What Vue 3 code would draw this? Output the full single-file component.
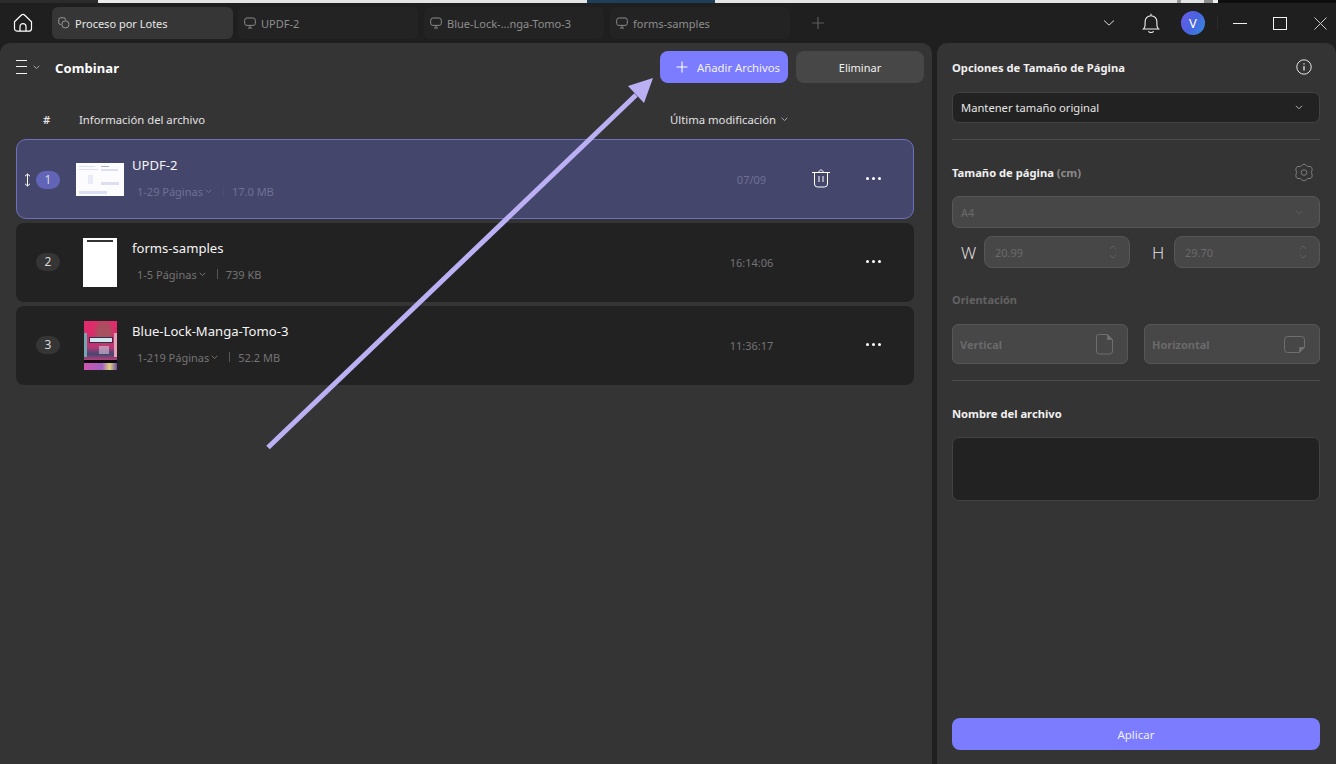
<template>
  <div class="app">
    <div class="desktop-strip">
      <span class="strip-dark"></span>
      <span class="strip-pale"></span>
      <span class="strip-light"></span>
      <span class="strip-blue"></span>
      <span class="strip-light strip-fill"></span>
      <span class="strip-grey"></span>
      <span class="strip-black"></span>
    </div>

    <header class="titlebar">
      <button class="home-btn">
        <svg width="20" height="20" viewBox="0 0 20 20" fill="none" stroke="#fff" stroke-width="1.2">
          <path d="M1.500 8.800 8.200 2.300a2.600 2.600 0 0 1 3.600 0l6.700 6.500v6.600a2.800 2.800 0 0 1-2.800 2.800H4.300a2.800 2.800 0 0 1-2.800-2.800Z" />
          <path d="M7 18.200v-4.600a3 3 0 0 1 6 0v4.600" />
        </svg>
      </button>
      <div class="tab tab-active">
        <svg width="12" height="12" viewBox="0 0 12 12" fill="none" stroke="#9a9a9a" stroke-width="1">
          <path d="M3.200 7.400H2.400A1.600 1.600 0 0 1 .8 5.800V2.400A1.600 1.600 0 0 1 2.400.8h3.400a1.600 1.600 0 0 1 1.600 1.600v.8" />
          <circle cx="7.400" cy="7.400" r="3.600" />
        </svg>
        <span>Proceso por Lotes</span>
      </div>
      <div v-for="tab in tabs" :key="tab" class="tab">
        <svg width="12" height="12" viewBox="0 0 12 12" fill="none" stroke="#8a8a8a" stroke-width="1">
          <rect x=".7" y="1" width="10.600" height="7.400" rx="2.200" />
          <path d="M6 8.400v2.200M4 11h4" />
        </svg>
        <span>{{ tab }}</span>
      </div>
      <svg class="tab-add" width="14" height="14" viewBox="0 0 14 14" stroke="#5c5c5c" stroke-width="1.200">
        <path d="M7 1v12M1 7h12" />
      </svg>
      <div class="window-tools">
        <svg class="tool-chevron" width="12" height="8" viewBox="0 0 12 8" fill="none" stroke="#d8d8d8" stroke-width="1">
          <path d="m1 1.500 5 4.600 5-4.600" />
        </svg>
        <svg class="tool-bell" width="18" height="21" viewBox="0 0 18 21" fill="none" stroke="#f2f2f2" stroke-width="1.100">
          <path d="M1.500 16h15c-1.200-1.100-1.600-2.400-1.600-4V8.600a5.900 5.900 0 0 0-11.800 0V12c0 1.600-.4 2.900-1.600 4Z" />
          <path d="M9 .8v1.800M6.400 18.400c1.200 1.500 4 1.500 5.200 0" />
        </svg>
        <div class="avatar">V</div>
        <span class="tool-sep"></span>
        <span class="win-min"></span>
        <span class="win-max"></span>
        <svg class="win-close" width="13" height="13" viewBox="0 0 13 13" stroke="#c8c8c8" stroke-width="1">
          <path d="m.5.5 12 12M12.500.5l-12 12" />
        </svg>
      </div>
    </header>

    <main class="workspace">
      <section class="list-panel">
        <div class="list-head">
          <svg class="menu-icon" width="11" height="14" viewBox="0 0 11 14" stroke="#f0f0f0" stroke-width="1">
            <path d="M0 .5h11M0 6.500h11M0 13.500h11" />
          </svg>
          <svg class="menu-chevron" width="7" height="5" viewBox="0 0 7 5" fill="none" stroke="#a8a8a8" stroke-width="1">
            <path d="m.7.800 2.800 2.800L6.300.8" />
          </svg>
          <h1 class="panel-title">Combinar</h1>
          <button class="btn btn-add">
            <svg width="12" height="12" viewBox="0 0 12 12" stroke="#fff" stroke-width="1.100">
              <path d="M6 .5v11M.5 6h11" />
            </svg>
            <span>Añadir Archivos</span>
          </button>
          <button class="btn btn-remove">Eliminar</button>
        </div>

        <div class="columns">
          <span class="col-num">#</span>
          <span class="col-info">Información del archivo</span>
          <span class="col-date">
            Última modificación
            <svg width="7" height="5" viewBox="0 0 7 5" fill="none" stroke="#a8a8a8" stroke-width="1">
              <path d="m.7.800 2.800 2.800L6.300.8" />
            </svg>
          </span>
        </div>

        <div class="rows">
          <article v-for="file in files" :key="file.id" class="row" :class="{ selected: file.selected }">
            <div class="row-index">
              <svg v-if="file.selected" class="drag" width="7" height="14" viewBox="0 0 7 14" fill="none" stroke="#fff" stroke-width="1">
                <path d="M3.500 1v12M1 3.200 3.500 1 6 3.200M1 10.800 3.500 13 6 10.800" />
              </svg>
              <span class="badge">{{ file.id }}</span>
            </div>
            <div class="thumb-cell">
              <div v-if="file.kind === 'doc'" class="thumb-doc">
                <i class="d1"></i><i class="d1b"></i><i class="d2"></i><i class="d3"></i><i class="d3b"></i><i class="d4"></i><i class="d5"></i>
              </div>
              <div v-else-if="file.kind === 'form'" class="thumb-form"><i></i></div>
              <div v-else class="thumb-manga">
                <i class="m-cover"><b></b><u></u></i><i class="m-bar"></i><i class="m-foot"></i>
              </div>
            </div>
            <div class="file-text">
              <div class="file-name">{{ file.name }}</div>
              <div class="file-meta">
                <span>{{ file.pages }}</span>
                <svg width="7" height="5" viewBox="0 0 7 5" fill="none" stroke="currentColor" stroke-width="1">
                  <path d="m.7.800 2.800 2.800L6.300.8" />
                </svg>
                <span class="meta-sep"></span>
                <span>{{ file.size }}</span>
              </div>
            </div>
            <div class="file-date">{{ file.date }}</div>
            <div class="file-trash">
              <svg v-if="file.selected" width="18" height="20" viewBox="0 0 18 20" fill="none" stroke="#fff" stroke-width="1">
                <path d="M0 4.500h18M6.500 4 9 1.500 11.500 4M2.500 5v11a3 3 0 0 0 3 3h7a3 3 0 0 0 3-3V5M7 8v6M11 8v6" />
              </svg>
            </div>
            <div class="file-more"><i></i><i></i><i></i></div>
          </article>
        </div>
      </section>

      <aside class="options-panel">
        <div class="opt-head first">
          <h2>Opciones de Tamaño de Página</h2>
          <svg width="16" height="16" viewBox="0 0 16 16" fill="none" stroke="#e4e4e4" stroke-width="1">
            <circle cx="8" cy="8" r="7.200" />
            <path d="M8 7v4.500M8 4.200v1.400" stroke-width="1.300" />
          </svg>
        </div>
        <div class="select">
          <span>Mantener tamaño original</span>
          <svg width="8" height="5" viewBox="0 0 8 5" fill="none" stroke="#b0b0b0" stroke-width="1">
            <path d="m1 .8 3 3 3-3" />
          </svg>
        </div>
        <div class="divider"></div>

        <div class="opt-head size">
          <h2>Tamaño de página <em>(cm)</em></h2>
          <svg width="20" height="19" viewBox="0 0 20 19" fill="none" stroke="#7d7d7d" stroke-width="1">
            <path d="M6.500 3.500Q10-1 13.500 3.500 20 2.500 17.500 9.500 20 16.500 13.500 15.500 10 20 6.500 15.500 0 16.500 2.500 9.500 0 2.500 6.500 3.500Z" />
            <circle cx="10" cy="9.500" r="2.800" />
          </svg>
        </div>
        <div class="select disabled">
          <span>A4</span>
          <svg width="8" height="5" viewBox="0 0 8 5" fill="none" stroke="#5e5e5e" stroke-width="1">
            <path d="m1 .8 3 3 3-3" />
          </svg>
        </div>
        <div class="dims">
          <span class="dim-label w">W</span>
          <div class="dim-input">
            <span>20.99</span>
            <svg width="8" height="14" viewBox="0 0 8 14" fill="none" stroke="#5e5e5e" stroke-width="1">
              <path d="m1 4 3-3 3 3M1 10l3 3 3-3" />
            </svg>
          </div>
          <span class="dim-label h">H</span>
          <div class="dim-input">
            <span>29.70</span>
            <svg width="8" height="14" viewBox="0 0 8 14" fill="none" stroke="#5e5e5e" stroke-width="1">
              <path d="m1 4 3-3 3 3M1 10l3 3 3-3" />
            </svg>
          </div>
        </div>

        <h3 class="orient-title">Orientación</h3>
        <div class="orient">
          <div class="orient-btn">
            <span>Vertical</span>
            <svg width="17" height="21" viewBox="0 0 17 21" fill="none" stroke="#6e6e6e" stroke-width="1">
              <path d="M3.500.5h8l5 5v11.500a3 3 0 0 1-3 3h-10a3 3 0 0 1-3-3v-14a3 3 0 0 1 3-3Z" />
              <path d="M11.500.5v5h5" fill="#6e6e6e" />
            </svg>
          </div>
          <div class="orient-btn">
            <span>Horizontal</span>
            <svg width="21" height="17" viewBox="0 0 21 17" fill="none" stroke="#6e6e6e" stroke-width="1">
              <path d="M3.500.5h14a3 3 0 0 1 3 3v8l-5 5h-12a3 3 0 0 1-3-3v-10a3 3 0 0 1 3-3Z" />
              <path d="M20.500 11.500h-5v5" fill="#6e6e6e" />
            </svg>
          </div>
        </div>
        <div class="divider lower"></div>

        <div class="opt-head name">
          <h2>Nombre del archivo</h2>
        </div>
        <div class="name-box"></div>
        <button class="apply">Aplicar</button>
      </aside>
    </main>

    <svg class="callout" width="1336" height="764" viewBox="0 0 1336 764">
      <path d="M268 447.500 636 95" stroke="#bcb0f5" stroke-width="5" fill="none" />
      <path d="M653 78 628 86 644 103Z" fill="#bcb0f5" />
    </svg>
  </div>
</template>

<script setup>
const tabs = ['UPDF-2', 'Blue-Lock-...nga-Tomo-3', 'forms-samples']

const files = [
  { id: 1, kind: 'doc', name: 'UPDF-2', pages: '1-29 Páginas', size: '17.0 MB', date: '07/09', selected: true },
  { id: 2, kind: 'form', name: 'forms-samples', pages: '1-5 Páginas', size: '739 KB', date: '16:14:06', selected: false },
  { id: 3, kind: 'manga', name: 'Blue-Lock-Manga-Tomo-3', pages: '1-219 Páginas', size: '52.2 MB', date: '11:36:17', selected: false }
]
</script>

<style>
html,
body {
  margin: 0;
  background: #1f1f1f;
}
</style>

<style scoped>
.app {
  position: relative;
  width: 1336px;
  height: 764px;
  overflow: hidden;
  display: flex;
  flex-direction: column;
  background: #1f1f1f;
  color: #fff;
  font-family: "Noto Sans", "Open Sans", "Liberation Sans", sans-serif;
  font-size: 12px;
}

.desktop-strip {
  display: flex;
  height: 3px;
  flex: none;
}
.strip-dark { width: 98px; background: #2b2b2b; }
.strip-pale { width: 22px; background: #ececec; }
.strip-light { width: 467px; background: #e4e4e4; }
.strip-blue { width: 128px; background: #1d4058; }
.strip-fill { width: 462px; }
.strip-grey { width: 41px; background: linear-gradient(90deg, #999 0 10%, #e4e4e4 10% 66%, #8e8e8e 66% 88%, #eee 88%); }
.strip-black { flex: 1; background: #0e0e0e; }

.titlebar {
  display: flex;
  align-items: center;
  height: 40px;
  flex: none;
  background: #1f1f1f;
}
.home-btn {
  width: 52px;
  height: 40px;
  padding: 0 6px 0 0;
  border: 0;
  background: none;
  display: flex;
  align-items: center;
  justify-content: center;
}
.tab {
  width: 180px;
  height: 32px;
  margin-right: 6px;
  padding-left: 6px;
  box-sizing: border-box;
  display: flex;
  align-items: center;
  gap: 5px;
  border-radius: 6px;
  background: #232323;
  color: #8e8e8e;
  font-size: 11px;
  white-space: nowrap;
}
.tab-active {
  width: 181px;
  margin-right: 5px;
  background: #363636;
  color: #e8e8e8;
}
.tab-add {
  margin-left: 15px;
}
.window-tools {
  margin-left: auto;
  display: flex;
  align-items: center;
  height: 100%;
}
.tool-chevron { margin-right: 27px; }
.tool-bell { margin-right: 21px; }
.avatar {
  width: 24px;
  height: 24px;
  margin-top: -1px;
  border-radius: 50%;
  background: linear-gradient(120deg, #6a5bea 0%, #4a63e0 50%, #2f8fe0 100%);
  display: flex;
  align-items: center;
  justify-content: center;
  font-size: 13px;
}
.tool-sep {
  width: 1px;
  height: 14px;
  margin: 0 15px 0 12px;
  background: #2a2a2a;
}
.win-min {
  width: 14px;
  height: 1px;
  background: #f0f0f0;
  margin-right: 26px;
}
.win-max {
  width: 12px;
  height: 11px;
  border: 1px solid #f0f0f0;
  margin-right: 27px;
}
.win-close { margin-right: 9px; }

.workspace {
  flex: 1;
  display: flex;
  gap: 5px;
  min-height: 0;
}
.list-panel,
.options-panel {
  background: #353435;
  border-radius: 10px 10px 0 0;
}
.list-panel {
  width: 932px;
  flex: none;
  box-sizing: border-box;
  padding: 8px 8px 0 16px;
}
.list-head {
  display: flex;
  align-items: center;
  height: 32px;
}
.menu-chevron { margin-left: 6px; }
.panel-title {
  margin: 1px 0 0 15px;
  font-size: 13px;
  font-weight: 700;
  letter-spacing: .1px;
}
.btn {
  width: 128px;
  height: 32px;
  border: 0;
  border-radius: 8px;
  color: #f2f2f2;
  font: inherit;
  font-size: 11px;
  padding: 0;
}
.btn-add {
  margin-left: auto;
  background: #7b7cff;
  display: flex;
  align-items: center;
  gap: 9px;
  padding-left: 16px;
  box-sizing: border-box;
  font-size: 11.300px;
  white-space: nowrap;
}
.btn-remove {
  margin-left: 8px;
  background: #474747;
}

.columns {
  display: flex;
  align-items: center;
  height: 20px;
  margin-top: 26px;
  font-size: 11.300px;
  color: #e2e2e2;
}
.col-num {
  width: 63px;
  padding-left: 27px;
  box-sizing: border-box;
  font-weight: 600;
}
.col-date {
  margin-left: auto;
  margin-right: 136px;
  display: flex;
  align-items: center;
  gap: 5px;
}

.rows {
  display: flex;
  flex-direction: column;
  gap: 4px;
  width: 898px;
  margin-top: 11px;
}
.row {
  height: 79px;
  box-sizing: border-box;
  border-radius: 8px;
  background: #232223;
  display: flex;
  color: #747474;
}
.row.selected {
  background: #45466b;
  border: 1px solid #6d70bd;
  border-radius: 10px;
  color: #6f7195;
  margin: -1px 0 0;
  height: 80px;
  padding-top: 1px;
}
.row-index {
  position: relative;
  width: 60px;
  flex: none;
  padding: 30px 0 0 20px;
  box-sizing: border-box;
}
.selected .row-index {
  margin-left: -1px;
}
.drag {
  position: absolute;
  left: 8px;
  top: 32px;
}
.badge {
  display: block;
  width: 24px;
  height: 18px;
  border-radius: 9px;
  background: #353535;
  color: #d8d8d8;
  font-size: 12px;
  line-height: 18px;
  text-align: center;
}
.selected .badge {
  background: #6264b8;
}
.thumb-cell {
  width: 48px;
  margin-right: 8px;
  flex: none;
  display: flex;
  align-items: center;
  justify-content: center;
}
.thumb-doc {
  position: relative;
  width: 48px;
  height: 33px;
  margin-top: -1px;
  background: #fcfcff;
}
.thumb-doc i {
  position: absolute;
  display: block;
  background: #dcdef4;
}
.d1 { left: 3px; top: 3px; width: 16px; height: 1px; }
.d1b { left: 3px; top: 6px; width: 19px; height: 1px; }
.d2 { left: 12px; top: 12px; width: 5px; height: 9px; opacity: .6; }
.d3 { left: 25px; top: 3px; width: 8px; height: 1px; background: #a9abd8 !important; }
.d3b { left: 25px; top: 6px; width: 17px; height: 2px; }
.d4 { left: 25px; top: 19px; width: 18px; height: 3px; }
.d5 { left: 3px; top: 28px; width: 28px; height: 3px; }
.thumb-form {
  width: 34px;
  height: 49px;
  background: #fff;
  position: relative;
}
.thumb-form i {
  position: absolute;
  left: 4px;
  top: 2px;
  width: 26px;
  height: 2px;
  background: #333;
}
.thumb-manga {
  width: 33px;
  height: 49px;
  display: flex;
  flex-direction: column;
}
.thumb-manga i { display: block; }
.m-cover {
  position: relative;
  height: 39px;
  background:
    radial-gradient(ellipse at 60% 30%, #a8505f 0 20%, transparent 40%),
    linear-gradient(90deg, #6fa8b0 0 10%, transparent 10% 90%, #e8a0b8 90%) 0 12px / 100% 24px no-repeat,
    linear-gradient(180deg, #e22c6c 0%, #d62a68 55%, #b03a78 68%, #46466f 85%, #b8407f 100%);
}
.m-cover b {
  position: absolute;
  left: 6px;
  top: 17px;
  width: 22px;
  height: 4px;
  background: #cfe8f0;
  outline: 1px solid #30304e;
}
.m-cover u {
  position: absolute;
  left: 15px;
  top: 25px;
  width: 10px;
  height: 8px;
  background: #dfe3f2;
  opacity: .5;
}
.m-bar { height: 3px; background: #0b0b0b; }
.m-foot {
  flex: 1;
  background: linear-gradient(90deg, #d055b0 0%, #9f60c0 55%, #e0d080 78%, #6a4fa0 100%);
}
.file-text {
  width: 586px;
  flex: none;
  padding: 15px 0 0 0;
  box-sizing: border-box;
}
.selected .file-text { padding-top: 14px; }
.file-name {
  color: #f4f4f4;
  font-size: 13.100px;
  line-height: 20px;
}
.file-meta {
  display: flex;
  align-items: center;
  margin: 7px 0 0 5px;
  height: 18px;
  font-size: 11px;
  gap: 2px;
}
.meta-sep {
  width: 1px;
  height: 10px;
  margin: 0 6px 0 9px;
  background: #555;
}
.selected .meta-sep { background: #4b4c72; }
.file-date {
  width: 65px;
  flex: none;
  margin-left: 1px;
  text-align: center;
  padding-top: 32px;
  font-size: 11px;
  line-height: 16px;
}
.selected .file-date { padding-top: 31px; }
.file-trash {
  width: 68px;
  flex: none;
  padding: 29px 0 0 28px;
  box-sizing: border-box;
}
.selected .file-trash { padding-top: 27px; }
.file-more {
  display: flex;
  gap: 3px;
  padding: 37px 0 0 14px;
}
.selected .file-more { padding-top: 36px; }
.file-more i {
  width: 3px;
  height: 3px;
  border-radius: 50%;
  background: #fff;
}

.options-panel {
  flex: 1;
  box-sizing: border-box;
  padding: 0 16px 14px 15px;
  display: flex;
  flex-direction: column;
}
.opt-head {
  display: flex;
  align-items: center;
  justify-content: space-between;
  padding-right: 8px;
}
.opt-head h2 {
  margin: 0;
  font-size: 11.200px;
  font-weight: 700;
  color: #f0f0f0;
}
.opt-head em {
  font-style: normal;
  color: #8a8a8a;
}
.opt-head.first { height: 20px; margin-top: 14px; }
.opt-head.size { height: 20px; margin-top: 22px; padding-right: 6px; }
.opt-head.name { height: 20px; margin-top: 22px; }
.select {
  height: 31px;
  margin-top: 15px;
  box-sizing: border-box;
  border: 1px solid #434343;
  border-radius: 7px;
  background: #232223;
  padding: 0 16px 0 8px;
  display: flex;
  align-items: center;
  justify-content: space-between;
  font-size: 11.200px;
  color: #e6e6e6;
}
.select.disabled {
  height: 32px;
  margin-top: 14px;
  background: #474747;
  border-color: #575757;
  color: #6a6a6a;
  font-size: 11px;
}
.divider {
  height: 1px;
  margin-top: 16px;
  background: #4d4d4d;
}
.dims {
  display: flex;
  align-items: center;
  height: 32px;
  margin-top: 8px;
}
.dim-label {
  font-family: "Open Sans", "Noto Sans", sans-serif;
  font-size: 17px;
  font-weight: 300;
  color: #e8e8e8;
  flex: none;
}
.dim-label.w { width: 32px; padding-left: 9px; box-sizing: border-box; }
.dim-label.h { width: 44px; padding-left: 22px; box-sizing: border-box; }
.dim-input {
  width: 146px;
  height: 32px;
  box-sizing: border-box;
  border: 1px solid #575757;
  border-radius: 8px;
  background: #474747;
  padding: 0 12px 0 10px;
  display: flex;
  align-items: center;
  justify-content: space-between;
  color: #6a6a6a;
  font-size: 11px;
}
.orient-title {
  margin: 22px 0 0;
  height: 20px;
  line-height: 20px;
  font-size: 11px;
  font-weight: 700;
  color: #626262;
}
.orient {
  display: flex;
  justify-content: space-between;
  margin-top: 14px;
}
.orient-btn {
  width: 176px;
  height: 40px;
  box-sizing: border-box;
  border: 1px solid #575757;
  border-radius: 6px;
  background: #474747;
  padding: 0 14px 0 7px;
  display: flex;
  align-items: center;
  justify-content: space-between;
  color: #6a6a6a;
  font-size: 11px;
  font-weight: 700;
}
.name-box {
  height: 64px;
  margin-top: 14px;
  box-sizing: border-box;
  border: 1px solid #434343;
  border-radius: 7px;
  background: #232223;
}
.apply {
  margin-top: auto;
  height: 32px;
  border: 0;
  border-radius: 8px;
  background: #7b7cff;
  color: #efefff;
  font: inherit;
  font-size: 11.500px;
}

.callout {
  position: absolute;
  left: 0;
  top: 0;
  pointer-events: none;
}
</style>
